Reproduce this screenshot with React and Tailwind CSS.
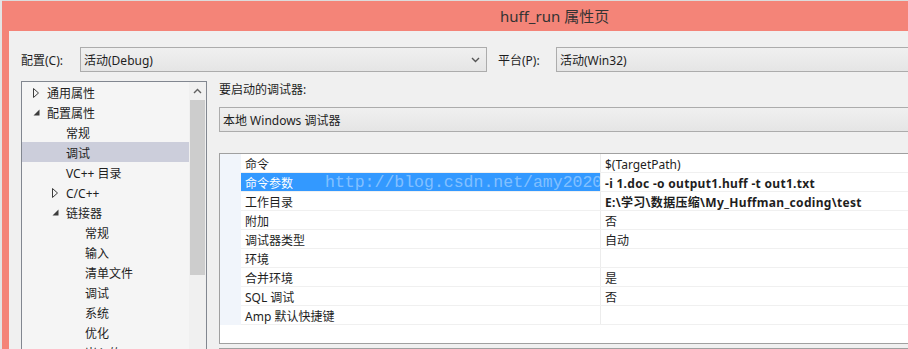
import React from "react";

const tree = [
  { t: "通用属性", l: 0, tri: "closed" },
  { t: "配置属性", l: 0, tri: "open" },
  { t: "常规", l: 1 },
  { t: "调试", l: 1, sel: true },
  { t: "VC++ 目录", l: 1 },
  { t: "C/C++", l: 1, tri: "closed" },
  { t: "链接器", l: 1, tri: "open" },
  { t: "常规", l: 2 },
  { t: "输入", l: 2 },
  { t: "清单文件", l: 2 },
  { t: "调试", l: 2 },
  { t: "系统", l: 2 },
  { t: "优化", l: 2 },
  { t: "嵌入的 IDL", l: 2 },
];

const levelPad = ["pl-[11px]", "pl-[30px]", "pl-[49px]"];

const rows = [
  { n: "命令", v: "$(TargetPath)" },
  { n: "命令参数", v: "-i 1.doc -o output1.huff -t out1.txt", b: true, sel: true },
  { n: "工作目录", v: "E:\\学习\\数据压缩\\My_Huffman_coding\\test", b: true },
  { n: "附加", v: "否" },
  { n: "调试器类型", v: "自动" },
  { n: "环境", v: "" },
  { n: "合并环境", v: "是" },
  { n: "SQL 调试", v: "否" },
  { n: "Amp 默认快捷键", v: "" },
];

function Tri({ kind }) {
  if (kind === "closed")
    return (
      <svg width="6" height="10" viewBox="0 0 6 10">
        <polygon points="0.5,0.5 5.5,5 0.5,9.5" fill="none" stroke="#3c3c3c" strokeWidth="1" />
      </svg>
    );
  if (kind === "open")
    return (
      <svg width="7" height="7" viewBox="0 0 7 7">
        <polygon points="6.5,0.5 6.5,6.5 0.5,6.5" fill="#3c3c3c" />
      </svg>
    );
  return null;
}

function Chevron() {
  return (
    <svg width="9" height="6" viewBox="0 0 9 6">
      <polyline points="1,1 4.5,4.5 8,1" fill="none" stroke="#555" strokeWidth="1.4" />
    </svg>
  );
}

export default function App() {
  return (
    <div className="w-[908px] h-[349px] overflow-hidden flex bg-[#dcdcdc] font-['Noto_Sans','Noto_Sans_CJK_SC',sans-serif] text-[12px] text-[#1e1e1e]">
      <div className="w-[2px] shrink-0 bg-[#e4e4e4]" />
      <div className="flex-1 flex flex-col mt-[1px] bg-[#f48478] pl-[7px] min-w-0">
        {/* title bar */}
        <div className="h-[30px] shrink-0 flex items-center pl-[491px] text-[15px] text-[#333] leading-none">
          huff_run 属性页
        </div>
        {/* content */}
        <div className="flex-1 bg-[#f0f0f0] pl-[12px] pt-[16px] flex flex-col min-w-0">
          {/* config row */}
          <div className="flex items-center h-[25px] shrink-0">
            <div className="w-[59px] shrink-0 pt-[2px]">配置(C):</div>
            <div className="w-[407px] h-[25px] shrink-0 border border-[#acacac] bg-gradient-to-b from-[#f0f0f0] to-[#e5e5e5] flex items-center pl-[3px] pr-[6px]">
              <span className="flex-1 pt-[2px]">活动(Debug)</span>
              <Chevron />
            </div>
            <div className="w-[58px] shrink-0 ml-[11px] pt-[2px]">平台(P):</div>
            <div className="w-[420px] h-[25px] shrink-0 border border-[#acacac] bg-gradient-to-b from-[#f0f0f0] to-[#e5e5e5] flex items-center pl-[3px] pt-[2px]">
              活动(Win32)
            </div>
          </div>

          {/* main */}
          <div className="flex gap-[12px] mt-[9px] flex-1 min-h-0">
            {/* tree */}
            <div className="w-[186px] shrink-0 border-l border-t border-r border-[#828790] bg-[#f5f5f5] flex">
              <div className="flex-1 flex flex-col">
                {tree.map((it, i) => (
                  <div
                    key={i}
                    className={`h-[20px] shrink-0 flex items-center ${levelPad[it.l]} ${it.sel ? "bg-[#cccedb]" : ""}`}
                  >
                    <div className="w-[14px] shrink-0 flex items-center pt-[1px]">
                      <Tri kind={it.tri} />
                    </div>
                    <span className="whitespace-nowrap pt-[3px]">{it.t}</span>
                  </div>
                ))}
              </div>
              <div className="w-[17px] shrink-0 bg-[#f0f0f0] flex flex-col">
                <div className="h-[18px] flex items-center justify-center">
                  <svg width="9" height="6" viewBox="0 0 9 6">
                    <polyline points="1,5 4.5,1.5 8,5" fill="none" stroke="#606060" strokeWidth="1.4" />
                  </svg>
                </div>
                <div className="h-[175px] mx-[1px] bg-[#cdcdcd]" />
              </div>
            </div>

            {/* right */}
            <div className="flex-1 flex flex-col min-w-0">
              <div className="h-[16px] leading-[16px] pt-[1px]">要启动的调试器:</div>
              <div className="mt-[10px] h-[25px] w-[700px] shrink-0 border border-[#acacac] bg-gradient-to-b from-[#f0f0f0] to-[#e5e5e5] flex items-center pl-[3px] pt-[2px]">
                本地 Windows 调试器
              </div>
              <div className="mt-[21px] h-[191px] w-[700px] shrink-0 border border-[#a0a0a0] bg-white flex">
                <div className="w-[21px] shrink-0 bg-[#f1f5fb] h-[171px]" />
                <div className="flex-1 flex flex-col">
                  {rows.map((r, i) => (
                    <div key={i} className="h-[19px] shrink-0 flex border-b border-[#f0f0f0] relative">
                      <div
                        className={`w-[360px] shrink-0 flex items-center pl-[4px] pt-[3px] border-r border-[#ececec] ${r.sel ? "bg-[#3399ff] text-white" : ""}`}
                      >
                        {r.n}
                      </div>
                      <div className={`flex-1 flex items-center pl-[4px] pt-[3px] whitespace-nowrap ${r.b ? "font-bold tracking-[0.3px]" : ""}`}>
                        {r.v}
                      </div>
                      {r.sel && (
                        <div className="absolute left-[84px] top-[1px] h-[19px] flex items-center font-['Liberation_Mono',monospace] text-[16.5px] leading-none text-white/40 whitespace-nowrap pointer-events-none">
                          http://blog.csdn.net/amy2020
                        </div>
                      )}
                    </div>
                  ))}
                </div>
              </div>
              <div className="mt-[4px] h-[20px] w-[700px] shrink-0 border border-[#a0a0a0] bg-[#f0f0f0]" />
            </div>
          </div>
        </div>
      </div>
    </div>
  );
}
